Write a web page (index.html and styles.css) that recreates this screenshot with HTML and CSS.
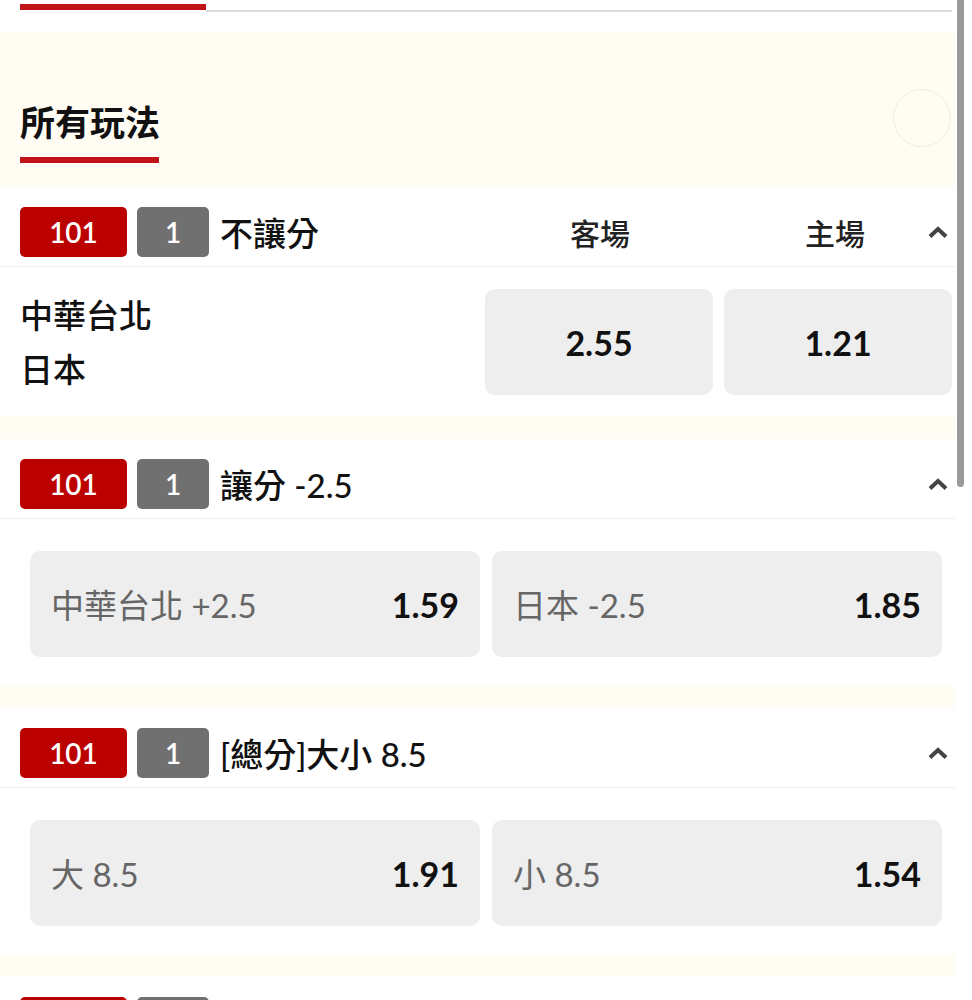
FILE: index.html
```html
<!DOCTYPE html>
<html lang="zh-Hant">
<head>
  <meta charset="UTF-8">
  <meta name="viewport" content="width=972, initial-scale=1.0">
  <title>所有玩法</title>
  <link rel="stylesheet" href="styles.css">
</head>
<body>
  <div class="screen">
    <div class="main">
      <div class="tabs">
        <div class="tab-on"></div>
        <div class="tab-line"></div>
      </div>

      <div class="section-title">
        <h2>所有玩法</h2>
        <div class="title-bar"></div>
        <div class="ring"></div>
      </div>

      <div class="market">
        <div class="mk-head">
          <span class="badge red">101</span>
          <span class="badge grey">1</span>
          <span class="mk-name">不讓分</span>
          <div class="cols">
            <span class="col">客場</span>
            <span class="col col-2">主場</span>
          </div>
          <svg class="caret" width="20" height="12" viewBox="0 0 20 12"><polyline points="2,10.5 10,3 18,10.5" /></svg>
        </div>
        <div class="ml-body">
          <div class="teams">
            <div>中華台北</div>
            <div>日本</div>
          </div>
          <button class="odd odd-c">2.55</button>
          <button class="odd odd-c">1.21</button>
        </div>
      </div>

      <div class="market">
        <div class="mk-head">
          <span class="badge red">101</span>
          <span class="badge grey">1</span>
          <span class="mk-name">讓分 -2.5</span>
          <svg class="caret" width="20" height="12" viewBox="0 0 20 12"><polyline points="2,10.5 10,3 18,10.5" /></svg>
        </div>
        <div class="mk-body">
          <button class="odd"><span class="pick">中華台北 +2.5</span><span class="price">1.59</span></button>
          <button class="odd"><span class="pick">日本 -2.5</span><span class="price">1.85</span></button>
        </div>
      </div>

      <div class="market">
        <div class="mk-head">
          <span class="badge red">101</span>
          <span class="badge grey">1</span>
          <span class="mk-name">[總分]大小 8.5</span>
          <svg class="caret" width="20" height="12" viewBox="0 0 20 12"><polyline points="2,10.5 10,3 18,10.5" /></svg>
        </div>
        <div class="mk-body">
          <button class="odd"><span class="pick">大 8.5</span><span class="price">1.91</span></button>
          <button class="odd"><span class="pick">小 8.5</span><span class="price">1.54</span></button>
        </div>
      </div>

      <!-- next market, only its top edge shows -->
      <div class="market">
        <div class="mk-head">
          <span class="badge red"></span>
          <span class="badge grey"></span>
        </div>
      </div>
    </div>
    <div class="rail"><div class="thumb"></div></div>
  </div>
</body>
</html>
```

FILE: styles.css
```css
html, body {
  margin: 0;
  height: 1000px;
  overflow: hidden;
  background: #fff;
}
body {
  font-family: Lato, "Noto Sans CJK TC", sans-serif;
  color: #111;
}
.screen {
  display: flex;
  width: 972px;
}
.main {
  width: 955px;
  background: #fffdf3;
}
.rail {
  width: 17px;
  background: #fff;
}
.thumb {
  width: 7px;
  height: 487px;
  margin-left: 2px;
  border-radius: 0 0 4px 4px;
  background: #9a9a9a;
}

/* tabs */
.tabs {
  display: flex;
  align-items: flex-start;
  height: 32px;
  padding: 4px 3px 0 20px;
  box-sizing: border-box;
  background: #fff;
}
.tab-on {
  width: 186px;
  height: 6px;
  background: #c0141a;
}
.tab-line {
  flex: 1;
  height: 2px;
  margin-top: 6px;
  background: #dedede;
}

/* title */
.section-title {
  position: relative;
  padding: 65px 0 24px 20px;
}
.section-title h2 {
  margin: 0;
  font-size: 35px;
  line-height: 50px;
  font-weight: bold;
}
.title-bar {
  width: 139px;
  height: 6px;
  margin-top: 10px;
  background: #c0141a;
}
.ring {
  position: absolute;
  left: 893px;
  top: 57px;
  width: 56px;
  height: 56px;
  border: 1.5px solid #efece4;
  border-radius: 50%;
}

/* markets */
.market {
  background: #fff;
  margin-bottom: 23px;
}
.mk-head {
  display: flex;
  align-items: center;
  height: 80px;
  padding: 10px 0 0 20px;
  box-sizing: border-box;
  border-bottom: 1px solid #efefef;
}
.badge {
  height: 50px;
  border-radius: 5px;
  color: #fff;
  font-size: 28px;
  font-weight: 600;
  line-height: 50px;
  text-align: center;
}
.badge.red {
  width: 107px;
  background: #bb0000;
}
.badge.grey {
  width: 72px;
  margin-left: 10px;
  background: #707070;
}
.mk-name {
  flex: 1;
  margin-left: 11px;
  font-size: 33px;
  font-weight: 500;
  white-space: nowrap;
}
.cols {
  display: grid;
  grid-template-columns: 228px 203px;
  column-gap: 11px;
}
.col {
  font-size: 30px;
  font-weight: 500;
  text-align: center;
  color: #222;
}
.col-2 {
  padding-left: 17px;
}
.caret {
  margin: 0 7px 0 auto;
  fill: none;
  stroke: #444;
  stroke-width: 4;
}
.cols + .caret {
  margin-left: 0;
}

.ml-body {
  display: flex;
  align-items: center;
  gap: 11px;
  padding: 21px 3px 20px 20px;
}
.teams {
  flex: 1;
  font-size: 33px;
  font-weight: 500;
  line-height: 54px;
}
.mk-body {
  display: grid;
  grid-template-columns: 1fr 1fr;
  column-gap: 12px;
  padding: 32px 13px 28px 30px;
}

.odd {
  display: flex;
  align-items: center;
  justify-content: space-between;
  height: 106px;
  padding: 0 21px;
  border: none;
  border-radius: 10px;
  background: #eeeeee;
  font-family: inherit;
  color: #111;
  cursor: pointer;
}
.odd-c {
  width: 228px;
  justify-content: center;
  font-size: 34px;
  font-weight: bold;
}
.pick {
  font-size: 33px;
  color: #666;
}
.price {
  font-size: 34px;
  font-weight: bold;
}
```
